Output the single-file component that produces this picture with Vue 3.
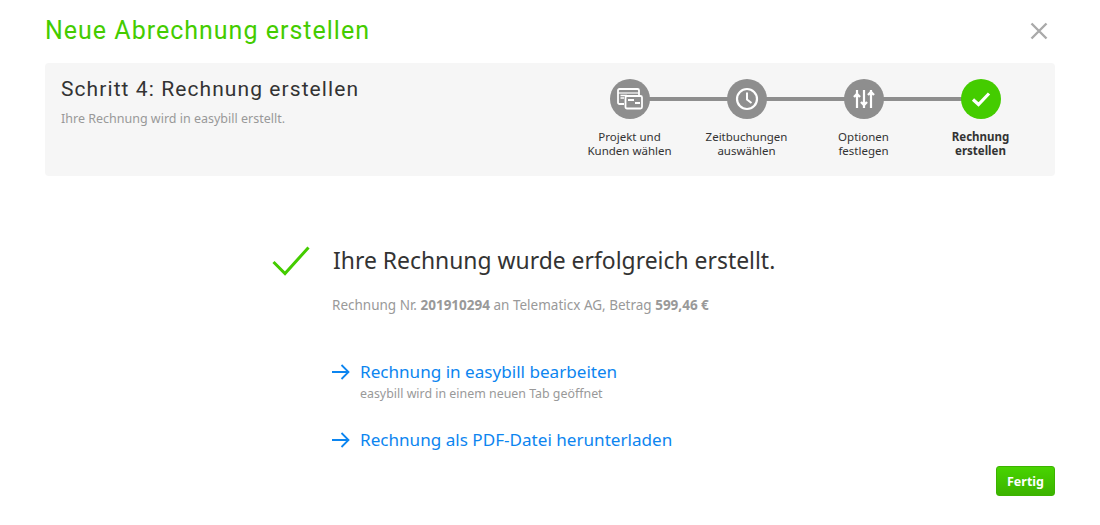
<script setup>
const steps = [
  { key: 'a', lines: ['Projekt und', 'Kunden wählen'] },
  { key: 'b', lines: ['Zeitbuchungen', 'auswählen'] },
  { key: 'c', lines: ['Optionen', 'festlegen'] },
  { key: 'd', lines: ['Rechnung', 'erstellen'], active: true },
]
</script>

<template>
  <div class="page">
    <header class="head">
      <h1>Neue Abrechnung erstellen</h1>
      <svg class="close" width="18" height="18" viewBox="0 0 18 18"><path d="M1.5 1.5 16.500 16.500M16.500 1.500 1.500 16.500" stroke="#aaa" stroke-width="2.400" fill="none"/></svg>
    </header>

    <section class="panel">
      <div class="intro">
        <h2>Schritt 4: Rechnung erstellen</h2>
        <p>Ihre Rechnung wird in easybill erstellt.</p>
      </div>
      <ol class="steps">
        <li v-for="s in steps" :key="s.key" class="step" :class="{ active: s.active }">
          <span class="dot">
            <svg v-if="s.key === 'a'" width="26" height="22" viewBox="0 0 26 22" fill="none" stroke="#fff">
              <path d="M7 16H2.500A1.500 1.500 0 0 1 1 14.500V2.500A1.500 1.500 0 0 1 2.500 1H20.500A1.500 1.500 0 0 1 22 2.500V7" stroke-width="1.800"/>
              <path d="M1 5H22" stroke-width="1.200"/>
              <path d="M3.500 7.500H10M3.500 10H7" stroke-width="1.300"/>
              <rect x="8.500" y="8" width="16.500" height="12.500" rx="1.500" stroke-width="1.800"/>
              <path d="M11 12H17M18 15H23" stroke-width="2"/>
            </svg>
            <svg v-else-if="s.key === 'b'" width="24" height="24" viewBox="0 0 24 24" fill="none" stroke="#fff">
              <circle cx="12" cy="12" r="10" stroke-width="2.200"/>
              <path d="M12 5.500V12.500L16.500 16" stroke-width="2"/>
            </svg>
            <svg v-else-if="s.key === 'c'" width="22" height="24" viewBox="0 0 22 24" fill="none" stroke="#fff" stroke-width="2.200">
              <path d="M4 3V21M11 3V21M18 3V21"/>
              <path d="M1 10 4 7 7 10M8 15 11 18 14 15M15 8 18 5 21 8" stroke-width="2.400"/>
            </svg>
            <svg v-else width="20" height="16" viewBox="0 0 20 16" fill="none" stroke="#fff" stroke-width="3.200">
              <path d="M2 8.500 7.500 13.500 18 2.500"/>
            </svg>
          </span>
          <span class="label">
            <span v-for="l in s.lines" :key="l">{{ l }}</span>
          </span>
        </li>
      </ol>
    </section>

    <main class="result">
      <div class="title-row">
        <svg width="38" height="30" viewBox="0 0 38 30" fill="none" stroke="#44cc00" stroke-width="3"><path d="M1.500 16 13 27.500 36.500 1.500"/></svg>
        <h3>Ihre Rechnung wurde erfolgreich erstellt.</h3>
      </div>
      <div class="content">
        <p class="meta">Rechnung Nr. <b>201910294</b> an Telematicx AG, Betrag <b>599,46 €</b></p>
        <div class="link first">
          <svg width="18" height="16" viewBox="0 0 18 16" fill="none" stroke="#0c85f0" stroke-width="1.800"><path d="M0 8H16.500M9.500 1 16.500 8 9.500 15"/></svg>
          <div>
            <a>Rechnung in easybill bearbeiten</a>
            <small>easybill wird in einem neuen Tab geöffnet</small>
          </div>
        </div>
        <div class="link second">
          <svg width="18" height="16" viewBox="0 0 18 16" fill="none" stroke="#0c85f0" stroke-width="1.800"><path d="M0 8H16.500M9.500 1 16.500 8 9.500 15"/></svg>
          <div><a>Rechnung als PDF-Datei herunterladen</a></div>
        </div>
      </div>
    </main>

    <footer class="foot"><button type="button">Fertig</button></footer>
  </div>
</template>

<style scoped>
.page {
  width: 1100px;
  height: 525px;
  box-sizing: border-box;
  padding: 0 45px;
  font-family: "Noto Sans", "Open Sans", sans-serif;
  overflow: hidden;
  background: #fff;
}
.head {
  height: 63px;
  display: flex;
  justify-content: space-between;
  align-items: flex-start;
}
h1 {
  margin: 15px 0 0;
  font: 400 25px/32px Roboto, sans-serif;
  letter-spacing: 1px;
  color: #44cc00;
}
.close { margin: 22px 7px 0 0; }
.panel {
  height: 113px;
  background: #f6f6f6;
  border-radius: 4px;
  display: flex;
  justify-content: space-between;
  padding: 0 16px;
}
h2 {
  margin: 13px 0 0;
  font: 400 21px/26px Roboto, sans-serif;
  letter-spacing: 1.080px;
  color: #333;
}
.intro p {
  margin: 8px 0 0;
  font-size: 12.500px;
  line-height: 18px;
  color: #999;
}
.steps {
  list-style: none;
  margin: 16px 0 0;
  padding: 0;
  display: flex;
  position: relative;
}
.steps::before {
  content: "";
  position: absolute;
  left: 58px;
  right: 58px;
  top: 18px;
  height: 4px;
  background: #8e8e8e;
}
.step {
  width: 117px;
  display: flex;
  flex-direction: column;
  align-items: center;
  position: relative;
}
.dot {
  width: 40px;
  height: 40px;
  border-radius: 50%;
  background: #8e8e8e;
  display: flex;
  align-items: center;
  justify-content: center;
}
.active .dot { background: #44cc00; }
.label {
  margin-top: 11px;
  display: flex;
  flex-direction: column;
  align-items: center;
  font-size: 11.500px;
  line-height: 14px;
  color: #333;
  white-space: nowrap;
}
.active .label { font-weight: 700; }
.result { padding-left: 227px; }
.title-row {
  display: flex;
  align-items: center;
  margin-top: 68px;
  height: 34px;
  gap: 23px;
}
h3 {
  margin: 0;
  font-size: 22.900px;
  font-weight: 400;
  line-height: 34px;
  color: #333;
  white-space: nowrap;
}
.content { padding-left: 60px; }
.meta {
  margin: 17px 0 0;
  font-size: 13.500px;
  line-height: 20px;
  color: #999;
}
.link {
  display: flex;
  gap: 10px;
  align-items: flex-start;
}
.link svg { margin-top: 5px; flex: none; }
.first { margin-top: 44px; }
.second { margin-top: 24px; }
.link a {
  display: block;
  font-size: 17.100px;
  line-height: 26px;
  color: #0c85f0;
  white-space: nowrap;
}
.link small {
  display: block;
  font-size: 12.400px;
  line-height: 18px;
  color: #999;
}
.foot {
  display: flex;
  justify-content: flex-end;
  margin-top: 13px;
}
button {
  width: 59px;
  height: 30px;
  padding: 0;
  border: 1px solid #3cb300;
  border-radius: 3px;
  background: linear-gradient(#48d400, #3cb300);
  color: #fff;
  font: 700 12.500px "Noto Sans", sans-serif;
}
</style>
